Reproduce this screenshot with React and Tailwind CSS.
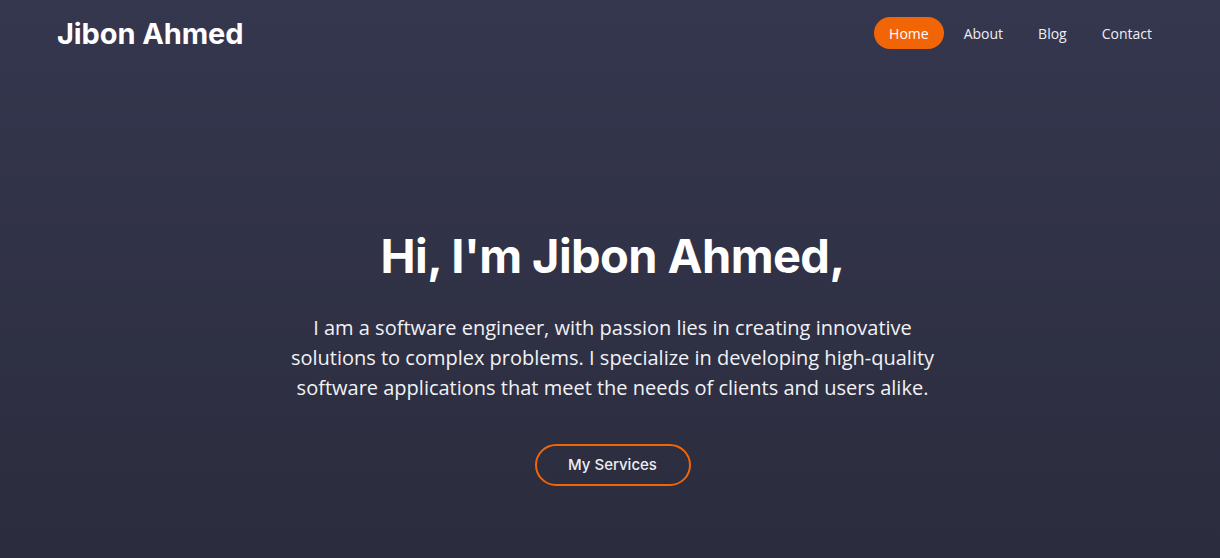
import React from 'react';

const links = ['Home', 'About', 'Blog', 'Contact'];

const App = () => {
  return (
    <div className="min-h-screen w-full bg-gradient-to-b from-[#35374f] to-[#2b2c3d] text-white">
      <header className="flex items-center justify-between pl-[57px] pr-[53px] pt-[17px]">
        <a href="#" className="font-['Inter',sans-serif] text-[29px] font-bold leading-none tracking-[-0.1px] text-white">
          Jibon Ahmed
        </a>
        <nav className="flex items-center gap-[5px] font-['Open_Sans',sans-serif] text-[14px]">
          {links.map((l, i) => (
            <a
              key={l}
              href="#"
              className={
                i === 0
                  ? 'flex h-8 items-center rounded-full bg-[#f26507] px-[15px] text-white'
                  : 'flex h-8 items-center rounded-full px-[15px] text-[#eceef3]'
              }
            >
              {l}
            </a>
          ))}
        </nav>
      </header>

      <main className="flex flex-col items-center pl-[5px] pt-[181px] pb-[73px] text-center">
        <h1 className="font-['Inter',sans-serif] text-[47px] font-bold leading-[52px] tracking-[-0.6px]">
          Hi, I'm Jibon Ahmed,
        </h1>
        <p className="mt-[31px] max-w-[660px] font-['Open_Sans',sans-serif] text-[20px] leading-[30px] text-[#f1f2f5]">
          I am a software engineer, with passion lies in creating innovative solutions to complex problems. I specialize in developing high-quality software applications that meet the needs of clients and users alike.
        </p>
        <button className="mt-[41px] h-[42px] w-[156px] rounded-full border-2 border-[#f26507] font-['Inter',sans-serif] text-[15px] font-medium text-[#eceef3]">
          My Services
        </button>
      </main>
    </div>
  );
};

export default App;
